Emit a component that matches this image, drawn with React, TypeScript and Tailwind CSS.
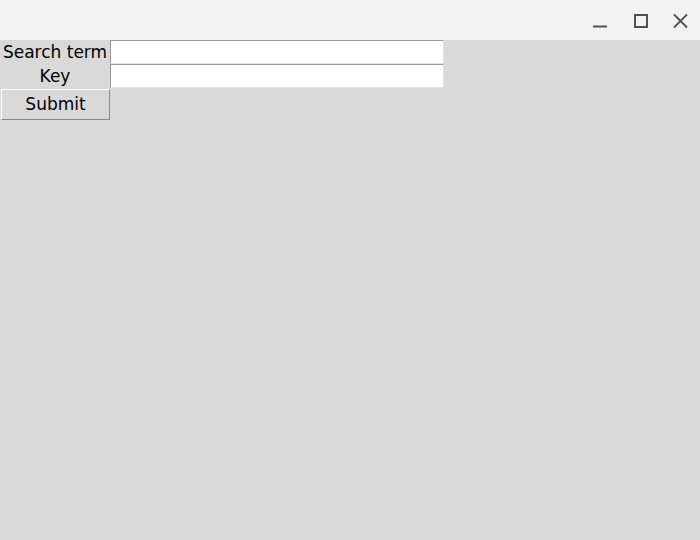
import React from "react";

const TitleBar = () => (
  <div className="h-[40px] bg-[#f2f2f2] flex items-center justify-end">
    <svg width="110" height="40" viewBox="0 0 110 40" className="shrink-0">
      {/* minimize */}
      <line x1="3" y1="26.5" x2="17" y2="26.5" stroke="#505050" strokeWidth="2" />
      {/* maximize */}
      <rect x="45" y="15" width="12" height="12" fill="none" stroke="#505050" strokeWidth="2" />
      {/* close */}
      <path d="M84 14.5 L97 27.5 M97 14.5 L84 27.5" stroke="#505050" strokeWidth="1.8" />
    </svg>
  </div>
);

const App = () => {
  return (
    <div
      className="w-[700px] h-[540px] bg-[#d9d9d9] flex flex-col text-[17px] text-black"
      style={{ fontFamily: '"DejaVu Sans", sans-serif' }}
    >
      <TitleBar />
      <div className="flex flex-col">
        <div className="flex h-[24px]">
          <div className="w-[110px] pt-[2px] flex items-center justify-center whitespace-nowrap">Search term</div>
          <input
            type="text"
            className="w-[334px] h-[24px] bg-white border-t border-l border-t-[#999] border-l-[#999] border-r border-b border-r-[#e4e4e4] border-b-[#e4e4e4] outline-none"
          />
        </div>
        <div className="flex h-[24px]">
          <div className="w-[110px] pt-[2px] flex items-center justify-center">Key</div>
          <input
            type="text"
            className="w-[334px] h-[24px] bg-white border-t border-l border-t-[#999] border-l-[#999] border-r border-b border-r-[#e4e4e4] border-b-[#e4e4e4] outline-none"
          />
        </div>
        <div className="flex pl-px">
          <button className="w-[109px] h-[31px] mt-px bg-[#d9d9d9] border border-t-white border-l-white border-r-[#888] border-b-[#888] flex items-center justify-center">
            Submit
          </button>
        </div>
      </div>
    </div>
  );
};

export default App;
